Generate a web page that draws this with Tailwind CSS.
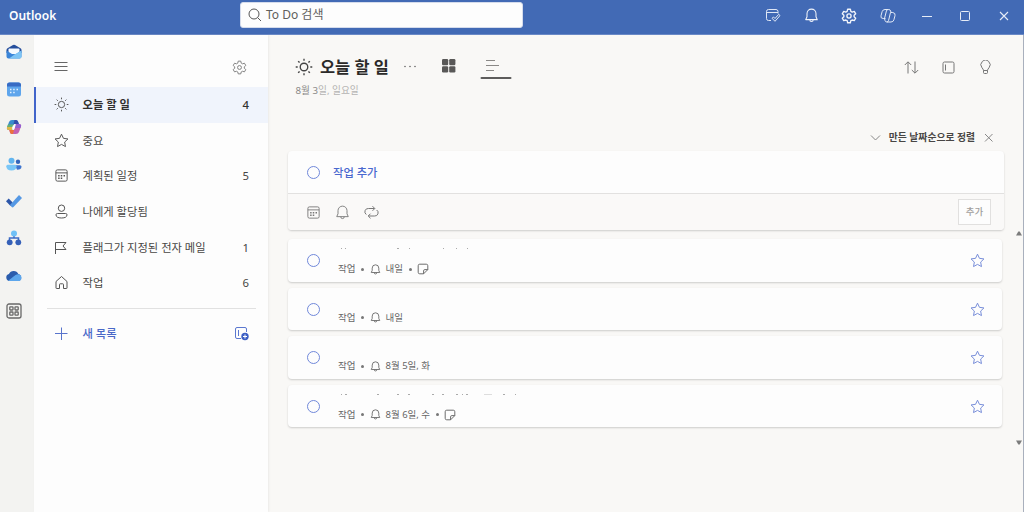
<!DOCTYPE html>
<html lang="ko">
<head>
  <meta charset="UTF-8" />
  <meta name="viewport" content="width=device-width, initial-scale=1.0" />
  <title>Outlook - To Do</title>
  <script src="https://cdn.jsdelivr.net/npm/@tailwindcss/browser@4"></script>
</head>
<body class="w-[1024px] h-[512px] overflow-hidden bg-[#f9f8f6] font-['Noto_Sans','Noto_Sans_CJK_KR',sans-serif] text-[11.3px] leading-none text-[#484644]">
  <!-- shared icons -->
  <svg class="hidden" fill="none">
    <defs>
      <symbol id="sun" viewBox="0 0 20 20"><circle cx="10" cy="10" r="4.2" /><path d="M10 .8v2.200M10 17v2.200M.8 10H3M17 10h2.200M3.500 3.500l1.600 1.600M14.900 14.900l1.600 1.600M16.500 3.500l-1.600 1.600M5.100 14.900l-1.600 1.600" /></symbol>
      <symbol id="gear" viewBox="0 0 20 20"><circle cx="10" cy="10" r="2.600" /><path d="M8.300 1.500h3.400l.6 2.700 1.700.9 2.600-.8 1.800 3-2 1.800v1.900l2 1.800-1.800 3-2.600-.8-1.700.9-.6 2.600H8.300l-.6-2.600-1.700-.9-2.600.8-1.800-3 2-1.800V9.100l-2-1.800 1.800-3 2.600.8 1.700-.9z" stroke-linejoin="round" /></symbol>
      <symbol id="star" viewBox="0 0 20 20"><path d="M10 1.600l2.600 5.500 6 .8-4.400 4.200 1.100 6L10 15.200l-5.300 2.900 1.100-6L1.400 7.900l6-.8z" stroke-linejoin="round" /></symbol>
      <symbol id="calendar" viewBox="0 0 20 20"><rect x="2.500" y="2.500" width="15" height="15" rx="2" /><path d="M2.500 6.500h15" /><path d="M9 10.200h2M12.700 10.200h2M5.500 13.700h2M9 13.700h2M5.500 10.200h2" stroke-width="2" /></symbol>
      <symbol id="bell" viewBox="0 0 20 20"><path d="M10 1.500a6 6 0 0 0-6 6v4.200L2.300 15.500h15.400L16 11.700V7.500a6 6 0 0 0-6-6zM7.700 15.800a2.300 2.300 0 0 0 4.600 0" stroke-linejoin="round" /></symbol>
      <symbol id="note" viewBox="0 0 20 20"><path d="M4.500 2h11A2.500 2.500 0 0 1 18 4.500V11l-7 7H4.500A2.500 2.500 0 0 1 2 15.500v-11A2.500 2.500 0 0 1 4.500 2zM18 11h-5a2 2 0 0 0-2 2v5" stroke-linejoin="round" /></symbol>
    </defs>
  </svg>

  <header class="flex items-center h-[35px] bg-[#426ab5] border-b border-[#6a89c6] text-white">
    <div class="w-[240px] pl-[9px] pb-[2px] text-[12px] font-semibold">Outlook</div>
    <div class="flex items-center w-[283px] h-[26px] mb-[5px] pl-[7px] gap-1 rounded-[3px] bg-[#fdfdfd] border border-[#d5dcec] text-[#605e5c] text-[12px]">
      <svg class="size-[14px]" viewBox="0 0 14 14" fill="none" stroke="#555" stroke-width="1"><circle cx="6" cy="6" r="5" /><path d="M9.600 9.600L13 13" /></svg>
      <span>To Do 검색</span>
    </div>
    <div class="flex items-center ml-auto mb-[3px] mr-[12px] gap-[22.700px]">
      <svg class="size-4" viewBox="0 0 16 16" fill="none" stroke="#dfe7f6" stroke-width="1"><path d="M6 12.500H3.500a2 2 0 0 1-2-2V3.500a2 2 0 0 1 2-2h7.500a2 2 0 0 1 2 2v2M1.500 4.500H13M7 10.300l1.500-1.300 1.500 1.500 3.700-4.200 1.300 1.300-5 5.700z" stroke-linejoin="round" /></svg>
      <svg class="size-[15px]" fill="none" stroke="#f2f5fb" stroke-width="1.400"><use href="#bell" /></svg>
      <svg class="size-4" fill="none" stroke="#f2f5fb" stroke-width="1.700"><use href="#gear" /></svg>
      <svg class="size-4" viewBox="0 0 16 16" fill="none" stroke="#e3eaf7" stroke-width="1" stroke-linejoin="round"><path d="M5.500 10.500H3.200Q.3 10.500 1 7.800L2.100 3.700Q2.700 1.500 5 1.500h3.800q1.400 0 1.800 1.500l.5 1.500" /><path d="M8 1.500Q6.800 1.500 6.400 3L4.500 10.500 5 12.500q.4 1.500 1.900 1.500H11q2.300 0 2.900-2.200L15 7.700q.7-2.700-2.200-3.200h-2.300L8.600 12.300Q8.200 14 6.900 14" /></svg>
      <svg class="size-4" viewBox="0 0 16 16" stroke="#e6ecf7"><path d="M3 8.500h10" /></svg>
      <svg class="size-4" viewBox="0 0 16 16" fill="none" stroke="#e6ecf7"><rect x="3.500" y="3.500" width="9" height="9" rx="1" /></svg>
      <svg class="size-4" viewBox="0 0 16 16" stroke="#e6ecf7" stroke-width="1.100"><path d="M4 4l8 8M12 4l-8 8" /></svg>
    </div>
  </header>

  <div class="flex h-[477px]">
    <!-- app rail -->
    <aside class="flex flex-col items-center w-[34px] shrink-0 pt-[9px] pr-[7px] gap-[21.300px] bg-[#f3f3f1]">
      <svg class="size-4 shrink-0" viewBox="0 0 16 16"><path d="M.5 6Q.5 5 1.500 4.300L7 1q1-.6 2 0l5.500 3.300q1 .7 1 1.700v3H.5z" fill="#264f9c" /><path d="M2.500 5.500q0-1 1-1h9q1 0 1 1V10h-11z" fill="#f4faff" /><path d="M.5 6.500L6 10h4l5.500-3.500v6a2 2 0 0 1-2 2h-11a2 2 0 0 1-2-2z" fill="#3b85d8" /><path d="M3 14.500L9 10.300l6.500-3.800v6a2 2 0 0 1-2 2z" fill="#7cc4f5" /></svg>
      <svg class="size-4 shrink-0" viewBox="0 0 16 16"><rect x="1" y="1.500" width="14" height="14" rx="2.500" fill="#5ea5ec" /><path d="M1 5.500V4A2.500 2.500 0 0 1 3.500 1.500h9A2.500 2.500 0 0 1 15 4v1.500z" fill="#376bc4" /><path d="M4 8.500h1.500M7.200 8.500h1.500M10.500 8.500H12M4 11.500h1.500M7.200 11.500h1.500" stroke="#e3f1ff" stroke-width="1.500" /></svg>
      <svg class="size-4 shrink-0" viewBox="0 0 16 16"><path d="M6 1h4q1.500 0 2 1.600L13 5H8L6 11H3Q.5 11 1 8.500L3 3Q3.700 1 6 1z" fill="#398bce" /><path d="M1.400 7h5.900L6 11H3Q.3 11 1 8.500z" fill="#dfb748" /><path d="M1.900 5.500h5.900L7.300 8H1.200z" fill="#62ae79" /><path d="M8.500 1H10q1.500 0 2 1.600l.8 2.400H7.500z" fill="#344eaa" /><path d="M10 15H6q-1.500 0-2-1.600L3.300 11H8l2-6h3q2.700 0 2 2.500L13 13q-.7 2-3 2z" fill="#c363b2" /><path d="M3.300 11H8l-1 4H6q-1.500 0-2-1.600z" fill="#ec713d" /><path d="M10 5h3q2.700 0 2 2.500L14.500 9H8.700z" fill="#9360d0" /><path d="M7 6.200h2.600l-1.200 3.600H5.800z" fill="#fff" /></svg>
      <svg class="size-4 shrink-0" viewBox="0 0 16 16"><circle cx="5.500" cy="4.800" r="3" fill="#62b5ef" /><circle cx="12" cy="5.800" r="2.200" fill="#3265bb" /><path d="M9 9.200h5q1.500 0 1.500 1.500 0 3-4.500 3z" fill="#3d74cf" /><path d="M1.500 8.700h7.700q1.300 0 1.300 1.500 0 4.200-5 4.200T.3 10.200q0-1.500 1.200-1.500z" fill="#79c6f7" /></svg>
      <svg class="size-4 shrink-0" viewBox="0 0 16 16"><path d="M0 8.300L2.700 5.500l4 4L4.500 13z" fill="#2c56a9" /><path d="M4 12L13 2 16 5 7.500 14q-.9.800-1.800 0z" fill="#5598e4" /></svg>
      <svg class="size-4 shrink-0" viewBox="0 0 16 16"><path d="M8 5v3M3.500 11V8h9v3" fill="none" stroke="#3b6bc6" stroke-width="1.500" /><circle cx="8" cy="3.500" r="3" fill="#6fc0f6" /><circle cx="3.700" cy="12.300" r="2.900" fill="#3560b8" /><circle cx="12.300" cy="12.300" r="2.900" fill="#3560b8" /></svg>
      <svg class="size-4 shrink-0" viewBox="0 0 16 16"><path d="M3.500 13A3.500 3.500 0 0 1 3 6.100 5 5 0 0 1 12.300 6 3.600 3.600 0 0 1 12.500 13z" fill="#2a5cad" /><path d="M2.500 12.500L9.500 7q3-1.800 5.300.5Q16.500 10.500 14.300 12.500q-.8.500-1.800.5h-9z" fill="#5ca6ec" /></svg>
      <svg class="size-4 shrink-0 -mt-[2px]" viewBox="0 0 16 16" fill="none" stroke="#686868" stroke-width="1.300"><rect x="1" y="1" width="14" height="14" rx="2" /><rect x="3.800" y="3.800" width="3.200" height="3.200" rx=".5" /><rect x="9" y="3.800" width="3.200" height="3.200" rx=".5" /><rect x="3.800" y="9" width="3.200" height="3.200" rx=".5" /><rect x="9" y="9" width="3.200" height="3.200" rx=".5" /></svg>
    </aside>

    <!-- lists -->
    <nav class="w-[234px] shrink-0 bg-[#fdfdfd] shadow-[1px_0_2px_rgba(0,0,0,0.06)]">
      <div class="flex items-center justify-between h-[52px] pt-[12px] pl-[20px] pr-[21.500px]">
        <svg class="size-[14px]" viewBox="0 0 14 14" stroke="#666"><path d="M.5 2.500h13M.5 6.500h13M.5 10.500h13" /></svg>
        <svg class="size-[15px]" fill="none" stroke="#777" stroke-width="1.200"><use href="#gear" /></svg>
      </div>
      <div class="flex items-center h-[35.600px] pl-[18px] pr-[19px] bg-[#f0f4fc] border-l-2 border-[#4164ca] font-bold text-[#323130]">
        <svg class="size-[15px] mr-[13.500px]" fill="none" stroke="#555" stroke-width="1.300"><use href="#sun" /></svg>
        <span>오늘 할 일</span><span class="ml-auto font-medium">4</span>
      </div>
      <div class="flex items-center h-[35.600px] pl-[20px] pr-[19px]">
        <svg class="size-[15px] mr-[13.500px]" fill="none" stroke="#555" stroke-width="1.300"><use href="#star" /></svg>
        <span>중요</span>
      </div>
      <div class="flex items-center h-[35.600px] pl-[20px] pr-[19px]">
        <svg class="size-[15px] mr-[13.500px]" fill="none" stroke="#555" stroke-width="1.300"><use href="#calendar" /></svg>
        <span>계획된 일정</span><span class="ml-auto">5</span>
      </div>
      <div class="flex items-center h-[35.600px] pl-[20px] pr-[19px]">
        <svg class="size-[15px] mr-[13.500px]" viewBox="0 0 15 15" fill="none" stroke="#555"><circle cx="7.500" cy="4.200" r="3.200" /><path d="M3.500 9.500h8q1.500 0 1.500 1.300 0 3.200-5.500 3.200T2 10.800q0-1.300 1.500-1.300z" /></svg>
        <span>나에게 할당됨</span>
      </div>
      <div class="flex items-center h-[35.600px] pl-[20px] pr-[19px]">
        <svg class="size-[15px] mr-[13.500px]" viewBox="0 0 15 15" fill="none" stroke="#555"><path d="M1.500 14V2.500h10.500L9 6l3 3.500H1.500" /></svg>
        <span>플래그가 지정된 전자 메일</span><span class="ml-auto">1</span>
      </div>
      <div class="flex items-center h-[35.600px] pl-[20px] pr-[19px]">
        <svg class="size-[15px] mr-[13.500px]" viewBox="0 0 15 15" fill="none" stroke="#555"><path d="M2 6.500L7.500 1.500 13 6.500V13q0 .5-.5.500H9.500V9.500q0-.7-.7-.7H6.200q-.7 0-.7.7v4H2.500Q2 13.500 2 13z" stroke-linejoin="round" /></svg>
        <span>작업</span><span class="ml-auto">6</span>
      </div>
      <div class="mt-[7px] ml-[13px] mr-[12px] border-t border-[#e1e1e1]"></div>
      <div class="flex items-center h-[50px] pl-[20px] pr-[19px] font-medium text-[#4a68c8]">
        <svg class="size-[14px] mr-[14.500px]" viewBox="0 0 14 14" stroke="#5874cc"><path d="M1 6.500h12.500M7.500 .5v12.500" /></svg>
        <span>새 목록</span>
        <svg class="size-[15px] ml-auto" viewBox="0 0 15 15" fill="none" stroke="#5b78d0"><path d="M7 12.500H3A1.500 1.500 0 0 1 1.500 11V3A1.500 1.500 0 0 1 3 1.500h8A1.500 1.500 0 0 1 12.500 3v3M4.500 4v6" /><circle cx="11" cy="10.500" r="3.700" fill="#3c5fc4" stroke="none" /><path d="M11 8.500v4M9 10.500h4" stroke="#fff" /></svg>
      </div>
    </nav>

    <main class="relative flex-1 border-r border-[#a9b0bd] pl-5">
      <div class="flex items-center h-[44px] pt-[20px] pl-[7px] pr-[30px]">
        <svg class="size-[18px] mr-[7px]" fill="none" stroke="#444" stroke-width="1.500"><use href="#sun" /></svg>
        <h1 class="text-[16.400px] font-bold text-[#2b2a29]">오늘 할 일</h1>
        <svg class="w-[14px] h-[4px] ml-[14px]" viewBox="0 0 14 4" fill="#666"><circle cx="2" cy="1.500" r=".8" /><circle cx="7" cy="1.500" r=".8" /><circle cx="12" cy="1.500" r=".8" /></svg>
        <svg class="size-[14px] ml-[25px] -mt-[2px]" viewBox="0 0 14 14" fill="#595857"><rect x="0" y="0" width="6.200" height="6.200" rx="1.200" /><rect x="7.200" y="0" width="6.200" height="6.200" rx="1.200" /><rect x="0" y="7.200" width="6.200" height="6.200" rx="1.200" /><rect x="7.200" y="7.200" width="6.200" height="6.200" rx="1.200" /></svg>
        <svg class="w-[32px] h-[26px] ml-[24px]" viewBox="0 0 32 26" fill="none" stroke="#8a8886"><path d="M6 6.500h9M6 11.500h13M6 16.500h8" /><path d="M1.500 24h29" stroke="#5d5c5b" stroke-width="2" stroke-linecap="round" /></svg>
        <div class="flex items-center ml-auto gap-[22px]">
          <svg class="size-[15px]" viewBox="0 0 15 15" fill="none" stroke="#777"><path d="M4 13.500V2M.8 5L4 1.800 7.200 5M11 1.500V13M7.800 10l3.200 3.200 3.200-3.200" /></svg>
          <svg class="size-[15px]" viewBox="0 0 15 15" fill="none" stroke="#777"><rect x="2" y="2" width="11" height="11" rx="1.500" /><path d="M4.500 4.500v6" /></svg>
          <svg class="size-[15px]" viewBox="0 0 15 15" fill="none" stroke="#777"><path d="M5.500 10.500Q5.300 9 4 7.800A4.600 4.600 0 1 1 11 7.800Q9.700 9 9.500 10.500zM5.500 10.500v2q0 1 1 1h2q1 0 1-1v-2" /></svg>
        </div>
      </div>
      <p class="pl-[7.500px] mt-[7px] h-[12px] text-[9.700px] text-[#b5b4b3]"><span class="text-[#8a8988]">8월 3</span>일, 일요일</p>

      <div class="flex items-center justify-end h-[20px] mt-[29.500px] mr-[29px] text-[9.800px] font-bold">
        <svg class="size-[11px] mr-[8px]" viewBox="0 0 11 11" fill="none" stroke="#888"><path d="M1 3.500l4.500 4.500L10 3.500" /></svg>
        <span>만든 날짜순으로 정렬</span>
        <svg class="size-[11px] ml-[8px]" viewBox="0 0 11 11" stroke="#888"><path d="M2 2l7.500 7.500M9.500 2L2 9.500" /></svg>
      </div>

      <section class="w-[716px] h-[79px] mt-[3.500px] rounded bg-[#fdfdfd] shadow-[0_1px_2px_rgba(0,0,0,0.18)] overflow-hidden">
        <div class="flex items-center h-[43px] pl-[19px] border-b border-[#e2e1e0] font-medium text-[11.300px] text-[#4a68cf]">
          <span class="size-[13px] mr-[13px] rounded-full border border-[#7088da]"></span><span class="pt-px">작업 추가</span>
        </div>
        <div class="flex items-center h-[36px] pl-[18px] pr-[13px] gap-[14px] bg-[#faf9f8]">
          <svg class="size-[15px]" fill="none" stroke="#777" stroke-width="1.200"><use href="#calendar" /></svg>
          <svg class="size-[15px]" fill="none" stroke="#777" stroke-width="1.200"><use href="#bell" /></svg>
          <svg class="size-[15px]" viewBox="0 0 15 15" fill="none" stroke="#777"><path d="M2.300 9.500A3.300 3.300 0 0 1 4.500 3.500h6M8.500 1.200l2.300 2.300-2.300 2.300M12.700 5a3.300 3.300 0 0 1-2.200 6h-6M6.500 8.700l-2.300 2.300 2.300 2.300" /></svg>
          <button class="w-[33px] h-[26px] ml-auto border border-[#e1e0df] bg-[#fdfdfd] text-[9.500px] font-medium text-[#a19f9d]">추가</button>
        </div>
      </section>

      <div class="flex flex-col gap-[6.100px] w-[714px] mt-[9px]">
        <article class="relative flex h-[42.500px] pl-[19px] rounded bg-[#fdfdfd] shadow-[0_1px_2px_rgba(0,0,0,0.18)]">
          <span class="size-[13px] mt-[15px] rounded-full border border-[#7088da]"></span>
          <div class="flex items-center h-3 mt-[24px] ml-[18px] gap-[5px] text-[9.500px] text-[#666]">
            <span>작업</span><i class="size-[3px] mx-px rounded-full bg-[#777]"></i><svg class="size-[11px]" fill="none" stroke="#666" stroke-width="1.600"><use href="#bell" /></svg><span class="-ml-px">내일</span><i class="size-[3px] mx-px rounded-full bg-[#777]"></i><svg class="size-[12px] -ml-px" fill="none" stroke="#666" stroke-width="1.600"><use href="#note" /></svg>
          </div>
          <svg class="absolute left-[52px] top-[9px] w-[140px] h-px" stroke="#aaa"><path d="M1 .5h1M5 .5h1M57 .5h2M69 .5h1M103 .5h1M116 .5h1M127 .5h1" /></svg>
          <svg class="size-[15px] mt-[14px] ml-auto mr-[17px]" fill="none" stroke="#748bd8" stroke-width="1.300"><use href="#star" /></svg>
        </article>
        <article class="flex h-[42.500px] pl-[19px] rounded bg-[#fdfdfd] shadow-[0_1px_2px_rgba(0,0,0,0.18)]">
          <span class="size-[13px] mt-[15px] rounded-full border border-[#7088da]"></span>
          <div class="flex items-center h-3 mt-[24px] ml-[18px] gap-[5px] text-[9.500px] text-[#666]">
            <span>작업</span><i class="size-[3px] mx-px rounded-full bg-[#777]"></i><svg class="size-[11px]" fill="none" stroke="#666" stroke-width="1.600"><use href="#bell" /></svg><span class="-ml-px">내일</span>
          </div>
          <svg class="size-[15px] mt-[14px] ml-auto mr-[17px]" fill="none" stroke="#748bd8" stroke-width="1.300"><use href="#star" /></svg>
        </article>
        <article class="flex h-[42.500px] pl-[19px] rounded bg-[#fdfdfd] shadow-[0_1px_2px_rgba(0,0,0,0.18)]">
          <span class="size-[13px] mt-[15px] rounded-full border border-[#7088da]"></span>
          <div class="flex items-center h-3 mt-[24px] ml-[18px] gap-[5px] text-[9.500px] text-[#666]">
            <span>작업</span><i class="size-[3px] mx-px rounded-full bg-[#777]"></i><svg class="size-[11px]" fill="none" stroke="#666" stroke-width="1.600"><use href="#bell" /></svg><span class="-ml-px">8월 5일, 화</span>
          </div>
          <svg class="size-[15px] mt-[14px] ml-auto mr-[17px]" fill="none" stroke="#748bd8" stroke-width="1.300"><use href="#star" /></svg>
        </article>
        <article class="relative flex h-[42.500px] pl-[19px] rounded bg-[#fdfdfd] shadow-[0_1px_2px_rgba(0,0,0,0.18)]">
          <span class="size-[13px] mt-[15px] rounded-full border border-[#7088da]"></span>
          <div class="flex items-center h-3 mt-[24px] ml-[18px] gap-[5px] text-[9.500px] text-[#666]">
            <span>작업</span><i class="size-[3px] mx-px rounded-full bg-[#777]"></i><svg class="size-[11px]" fill="none" stroke="#666" stroke-width="1.600"><use href="#bell" /></svg><span class="-ml-px">8월 6일, 수</span><i class="size-[3px] mx-px rounded-full bg-[#777]"></i><svg class="size-[12px] -ml-px" fill="none" stroke="#666" stroke-width="1.600"><use href="#note" /></svg>
          </div>
          <svg class="absolute left-[52px] top-[9px] w-[180px] h-px" stroke="#aaa"><path d="M1 .5h1M5 .5h2M37 .5h2M57 .5h2M68 .5h2M92 .5h2M102 .5h2M116 .5h2M122 .5h1M126 .5h2M163 .5h2M175 .5h1" /><path d="M144 .5h8" stroke="#ddd" /></svg>
          <svg class="size-[15px] mt-[14px] ml-auto mr-[17px]" fill="none" stroke="#748bd8" stroke-width="1.300"><use href="#star" /></svg>
        </article>
      </div>

      <!-- scrollbar arrows lie over the list's edge -->
      <svg class="absolute right-[1px] top-[196px] w-[6px] h-[5px]" viewBox="0 0 6 5" fill="#7c7c7c"><path d="M2.300 .5h1.400L6 4.500H0z" /></svg>
      <svg class="absolute right-[1px] top-[405px] w-[6px] h-[5px]" viewBox="0 0 6 5" fill="#7c7c7c"><path d="M2.300 4.500h1.400L6 .5H0z" /></svg>
    </main>
  </div>
</body>
</html>
